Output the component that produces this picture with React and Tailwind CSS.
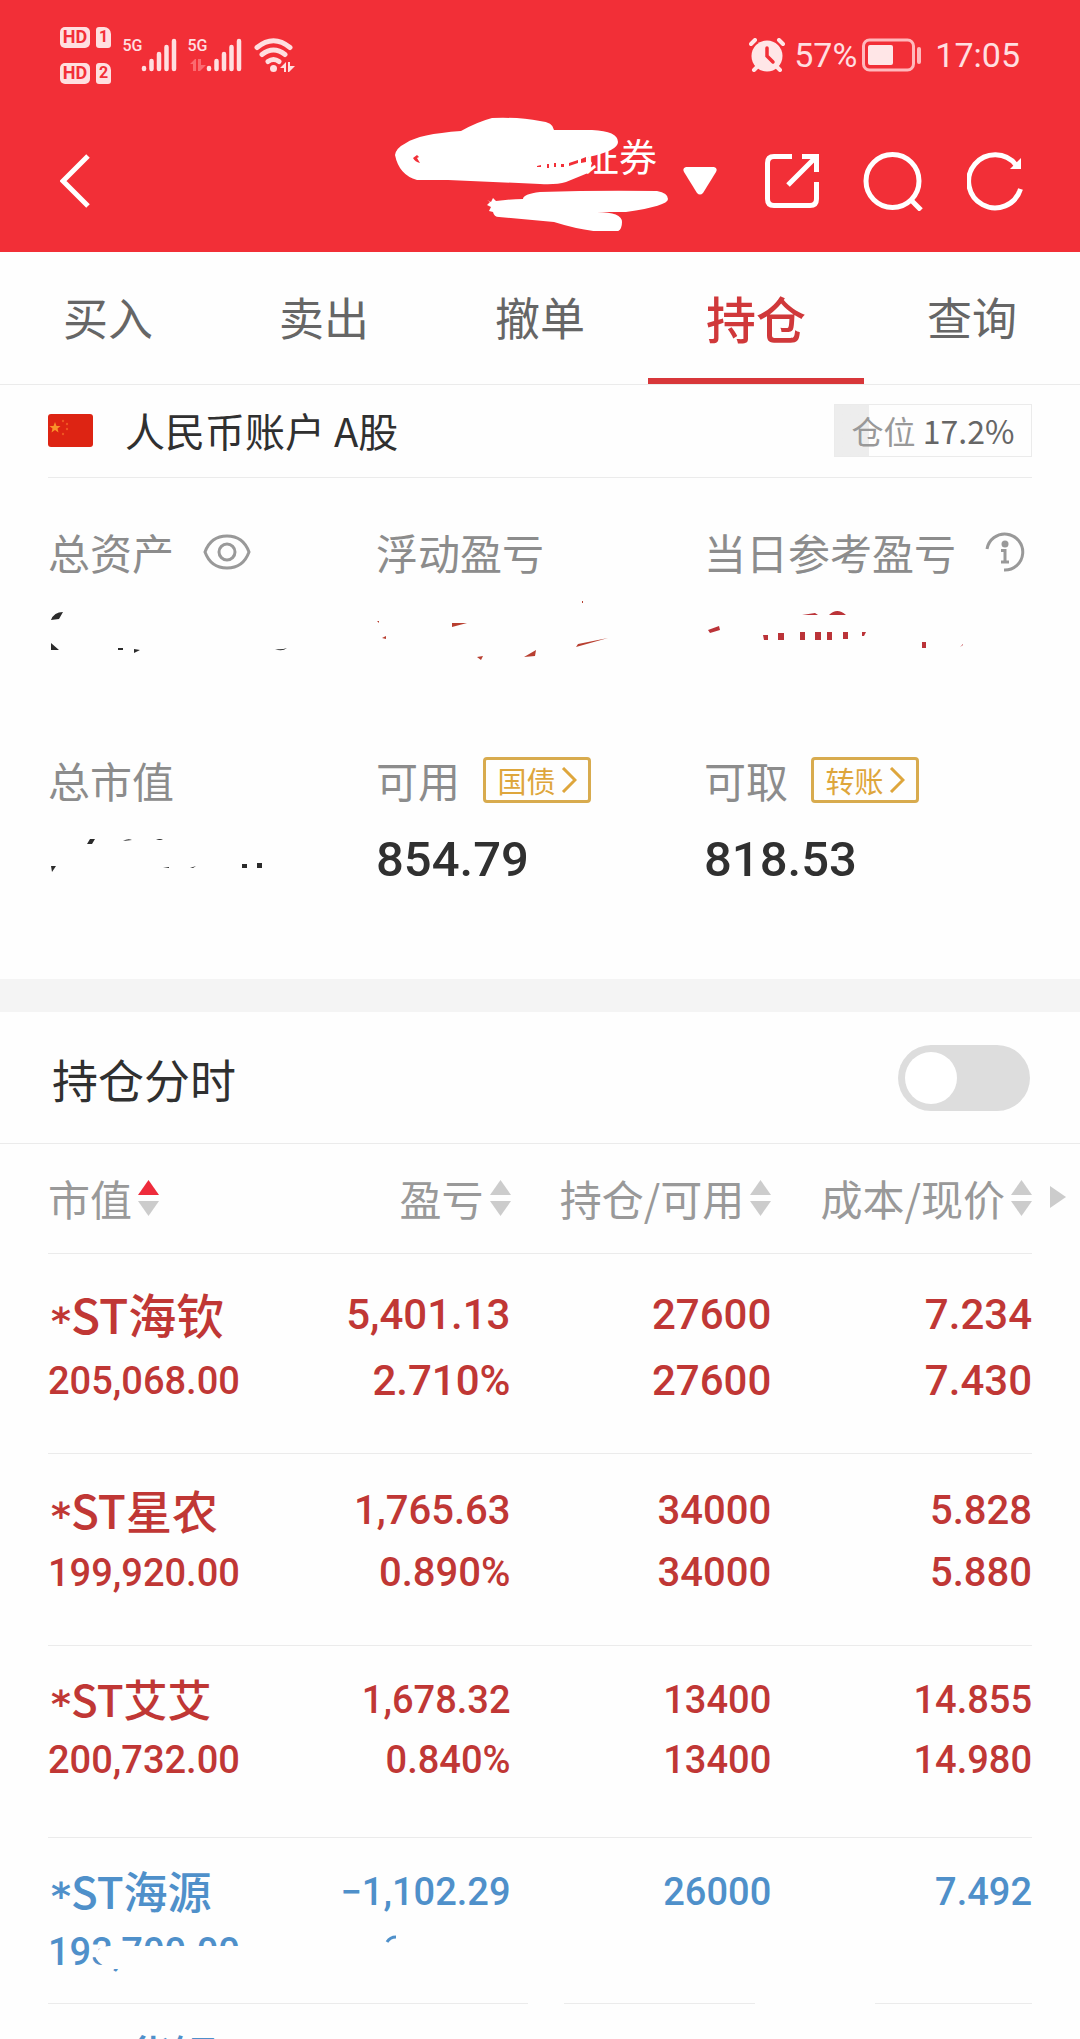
import { useState } from 'react'
import clsx from 'clsx'

const tabs = ['买入', '卖出', '撤单', '持仓', '查询']

const columns = [
  { label: '市值', sorted: true },
  { label: '盈亏' },
  { label: '持仓/可用' },
  { label: '成本/现价' },
]

const holdings = [
  { name: 'ST海钦', value: '205,068.00', profit: ['5,401.13', '2.710%'], amount: ['27600', '27600'], price: ['7.234', '7.430'], size: 'lg' },
  { name: 'ST星农', value: '199,920.00', profit: ['1,765.63', '0.890%'], amount: ['34000', '34000'], price: ['5.828', '5.880'], size: 'md' },
  { name: 'ST艾艾', value: '200,732.00', profit: ['1,678.32', '0.840%'], amount: ['13400', '13400'], price: ['14.855', '14.980'], size: 'sm' },
]

const rowSizes = {
  lg: { row: 'h-[200px]', cell: 'pt-7 leading-[66px]', name: 'h-[66px] text-[48px] leading-[62px]', number: 'text-[42px]' },
  md: { row: 'h-[192px]', cell: 'pt-[26px] leading-[62px]', name: 'h-[62px] text-[46px] leading-[58px]', number: 'text-[40px]' },
  sm: { row: 'h-[192px]', cell: 'pt-6 leading-[60px]', name: 'h-[60px] text-[44px] leading-[56px]', number: 'text-[38px]' },
}

const SimBadge = ({ number }) => (
  <div className="flex items-center gap-[6px] text-[#f22f37]">
    <span className="flex h-[21px] w-[30px] items-center justify-center rounded-[5px] bg-[#ffdfe0] text-[18px] font-bold leading-none">HD</span>
    <span className="flex h-[21px] w-[15px] items-center justify-center rounded-[3px] rounded-tr-[7px] bg-[#ffdfe0] text-[16px] font-bold leading-none">{number}</span>
  </div>
)

const Signal = ({ data }) => (
  <div className="flex items-start">
    <div className="flex w-[17px] flex-col items-center">
      <span className="text-[16px] font-medium leading-[16px] text-[#ffdfe0]">5G</span>
      <svg viewBox="0 0 16 12" className={clsx('mt-[5px] h-3 w-4', !data && 'invisible')} fill="#fb6a70" aria-hidden="true">
        <path d="M0 5 5 0h1v12H3V5zM8 0h3v6h5l-6 6H8z" />
      </svg>
    </div>
    <svg viewBox="0 0 36 34" className="h-[34px] w-9" stroke="#ffdfe0" strokeWidth="4.500" strokeLinecap="round" aria-hidden="true">
      <path d="M3 30v1M10.500 23v8M18 16v15M25.500 9v22M33 3v28" />
    </svg>
  </div>
)

const StatusBar = () => (
  <div className="flex h-[110px] items-center justify-between pl-[60px] pr-[60px] font-['Roboto',sans-serif]">
    <div className="flex items-center">
      <div className="flex flex-col gap-[15px]">
        <SimBadge number="1" />
        <SimBadge number="2" />
      </div>
      <div className="ml-[13px] flex gap-3">
        <Signal />
        <Signal data />
        <svg viewBox="0 0 42 34" className="h-[34px] w-[42px]" fill="none" stroke="#ffdfe0" strokeWidth="5" strokeLinecap="round" aria-hidden="true">
          <path d="M3 9.500Q19.500-4 36 9.500M8 16.500q11.500-9 23 0M14 23.500q5.500-4 11 0" />
          <circle cx="19.500" cy="30.500" r="3.500" fill="#ffdfe0" stroke="none" />
          <path d="M26 30l6-6v10h-2v-4zM34 24h2v4h5l-6 6h-1z" fill="#ffdfe0" stroke="none" />
        </svg>
      </div>
    </div>
    <div className="flex items-center text-[34px] leading-none text-[#ffdfe0]">
      <svg viewBox="0 0 36 34" className="h-[34px] w-9" fill="none" stroke="#ffe6e7" strokeWidth="4" strokeLinecap="round" aria-hidden="true">
        <circle cx="18" cy="18" r="15.500" fill="#ffe6e7" stroke="none" />
        <path d="M2 6l4-4M34 6l-4-4M5 32l4-4M31 32l-4-4" />
        <path d="M18 10v8l6 6" stroke="#f22f37" strokeWidth="3.500" />
      </svg>
      <span className="ml-[9px]">57%</span>
      <svg viewBox="0 0 60 34" className="ml-[5px] h-[34px] w-[60px]" fill="none" aria-hidden="true">
        <rect x="1.500" y="2" width="50" height="30" rx="6" stroke="#ffb9bc" strokeWidth="3" />
        <rect x="6" y="7" width="25" height="20" rx="2" fill="#ffe6e7" />
        <rect x="55" y="9" width="4" height="17" rx="2" fill="#ffb9bc" />
      </svg>
      <span className="ml-[13px]">17:05</span>
    </div>
  </div>
)

const NavBar = () => (
  <div className="flex h-[142px] items-center pl-[60px] pr-[56px] text-white">
    <button type="button" aria-label="返回">
      <svg viewBox="0 0 32 54" className="h-[54px] w-8" fill="none" stroke="currentColor" strokeWidth="5">
        <path d="M28 2 3 27l25 25" />
      </svg>
    </button>

    {/* Broker name, partly painted over */}
    <div className="relative ml-auto flex h-[114px] w-[273px] justify-end pr-[11px] pt-[14px] mb-[14px]">
      <h1 className="text-[38px] leading-[48px]">证券</h1>
      <svg viewBox="0 0 273 114" className="absolute inset-0 h-full w-full" aria-hidden="true">
        <path
          fill="#fff"
          d="M0 38Q1 31 11 26 24 17 66 14q16-9 31-13 28-1 48 3 13 1 14 9h38q26 1 26 12 0 9-30 15l4 6-4 10-22 9q-10 3-26 2l-92-4H22Q4 58 0 38ZM92 83l4 2 2-4 3 3q14-2 27-2 0-5 17-7 60-2 117-1 11 2 11 8 0 7-42 13h-34q30-1 30 10 0 10-8 10-25 1-60-10l-55-5Q99 100 98 95l-4-1 2-4-4-2 3-3Z"
        />
        <path fill="#f22f37" d="m18 41 4-3 2 2-2 1 3 5q-5-1-7-5ZM142 49l4-1v2h-4ZM152 47h2v4h-2ZM159 46h2v4h-2ZM166 47h3v3h-3ZM174 46l9-3v3l-9 3ZM186 42l5-2v5l-5 1Z" />
      </svg>
    </div>
    <button type="button" aria-label="切换账户" className="ml-[15px]">
      <svg viewBox="0 0 34 28" className="h-7 w-[34px]" fill="currentColor">
        <path d="M3 0h28q4 1 2 5L20 26q-3 3-6 0L1 5Q-1 1 3 0Z" />
      </svg>
    </button>
    <div className="ml-12 flex items-center gap-11">
      <button type="button" aria-label="分享">
        <svg viewBox="0 0 54 54" className="h-[54px] w-[54px]" fill="none" stroke="currentColor" strokeWidth="5">
          <path d="M27 2.500H9Q2.500 2.500 2.500 9v36q0 6.500 6.500 6.500h36q6.500 0 6.500-6.500V28M37 2.500h14.500V18M50 4 23 31" />
        </svg>
      </button>
      <button type="button" aria-label="搜索">
        <svg viewBox="0 0 60 60" className="h-[60px] w-[60px]" fill="none" stroke="currentColor" strokeWidth="5">
          <circle cx="29.500" cy="30" r="26.500" />
          <path d="m48 49 10 10" />
        </svg>
      </button>
      <button type="button" aria-label="刷新">
        <svg viewBox="0 0 57 60" className="h-[60px] w-[57px]" fill="none" stroke="currentColor" strokeWidth="5">
          <path d="M49 14A26.500 26.500 0 1 0 53.500 38" />
          <path d="M54 7v11H43Z" fill="currentColor" stroke="none" />
        </svg>
      </button>
    </div>
  </div>
)

const Flag = () => (
  <svg viewBox="0 0 45 33" className="h-[33px] w-[45px]" aria-hidden="true">
    <rect width="45" height="33" rx="3" fill="#dd2413" />
    <path fill="#f9922a" d="m7 8 1.500 4h4L9.500 14.500l1 4L7 16l-3.500 2.500 1-4-3-2.500h4z" />
    <g fill="#ee5522">
      <circle cx="15" cy="7" r="1.200" />
      <circle cx="19" cy="10" r="1.200" />
      <circle cx="19" cy="15" r="1.200" />
      <circle cx="15" cy="20" r="1.200" />
    </g>
  </svg>
)

const EyeIcon = () => (
  <svg viewBox="0 0 48 36" className="h-9 w-12" fill="none" stroke="#999" strokeWidth="3">
    <path d="M2 18C6 7 14 2 24 2s18 5 22 16C42 29 34 34 24 34S6 29 2 18Z" />
    <circle cx="24" cy="18" r="8" />
  </svg>
)

const InfoIcon = () => (
  <svg viewBox="0 0 40 40" className="h-10 w-10" fill="none" stroke="#999" strokeWidth="3">
    <path d="M2 17A18 18 0 1 1 19 38" />
    <circle cx="20" cy="12" r="3.500" fill="#999" stroke="none" />
    <path d="M16 18.500h4V30M16 30h8" />
  </svg>
)

const Field = ({ label, gap = 'gap-[29px]', extra, children }) => (
  <div>
    <div className={clsx('flex h-14 items-center text-[42px] leading-[56px] text-[#8c8c8c]', gap)}>
      <span>{label}</span>
      {extra}
    </div>
    {children}
  </div>
)

const LinkButton = ({ children }) => (
  <button type="button" className="flex h-[46px] w-[108px] items-center justify-center gap-[5px] rounded-[4px] border-3 border-[#d8ab4e] text-[29px] leading-none text-[#dea63c]">
    {children}
    <svg viewBox="0 0 16 26" className="h-[26px] w-4" fill="none" stroke="currentColor" strokeWidth="3" aria-hidden="true">
      <path d="m2 1 12 12L2 25" />
    </svg>
  </button>
)

// What is left of a figure after it was painted out
const Scraps = ({ d, color, className }) => (
  <svg viewBox="0 0 328 64" className={clsx('h-16 w-full', className)} preserveAspectRatio="xMinYMin" fill={color} aria-hidden="true">
    <path d={d} />
  </svg>
)

const Assets = () => (
  <section className="mx-12 grid h-[501px] grid-cols-3 grid-rows-[228px_1fr] pt-[46px]">
    <Field label="总资产" extra={<button type="button" aria-label="隐藏金额"><EyeIcon /></button>}>
      <Scraps
        className="mt-[20px]"
        color="#2b2b2b"
        d="M3 20Q6 12 15 12L11 19ZM3 43l8 7H3ZM70 48h5v2h-5ZM86 49l6 1-6 3ZM227 49q7 1 12-1-5 4-12 1Z"
      />
    </Field>
    <Field label="浮动盈亏">
      <Scraps
        className="mt-[20px]"
        color="#b83f30"
        d="M1 21h2v2ZM6 38l4-2v3ZM76 23l15 0-15 4ZM101 57l6-1-2 4ZM148 57l12-7-1 6ZM200 47l2-3 30-6ZM206 1h1v2h-1Z"
      />
    </Field>
    <Field label="当日参考盈亏" extra={<button type="button" aria-label="说明"><InfoIcon /></button>}>
      <Scraps
        className="mt-[20px]"
        color="#bb3338"
        d="M4 30l11-4 1 4-10 3ZM59 35h5v5h-4ZM74 33h6v7h-6ZM96 32h5v8h-5ZM111 32h6v8h-6ZM123 32h5v8h-5ZM139 32h5v7h-5ZM158 32h4l-2 4h-2ZM218 42h4v6h-4ZM98 15l13-2 3 2ZM125 15q8-8 17 0ZM256 47l3-3v1Z"
      />
    </Field>
    <Field label="总市值">
      <Scraps
        className="mt-[20px]"
        color="#2b2b2b"
        d="M39 16l3-5h5l-3 5ZM75 13q5-3 9-1ZM108 12q4-2 7 0ZM3 38h5l-4 6ZM115 40l6-1v1ZM142 40l6-2-3 2ZM194 36h5v4h-5ZM209 35h5v5h-5Z"
      />
    </Field>
    <Field label="可用" gap="gap-[23px]" extra={<LinkButton>国债</LinkButton>}>
      <p className="mt-[22px] font-['Roboto',sans-serif] text-[49px] font-medium leading-[60px] text-[#303030]">854.79</p>
    </Field>
    <Field label="可取" gap="gap-[23px]" extra={<LinkButton>转账</LinkButton>}>
      <p className="mt-[22px] font-['Roboto',sans-serif] text-[49px] font-medium leading-[60px] text-[#303030]">818.53</p>
    </Field>
  </section>
)

const SortIcon = ({ sorted }) => (
  <svg viewBox="0 0 21 36" className="h-9 w-[21px]" aria-hidden="true">
    <path d="M10.500 0 21 15H0Z" fill={sorted ? '#ee2b3b' : '#ccc'} />
    <path d="M0 21h21L10.500 36Z" fill="#ccc" />
  </svg>
)

const StockName = ({ children }) => (
  <>
    <span className="ml-[3px] font-['DejaVu_Sans',sans-serif] text-[38px] font-bold leading-none">*</span>
    {children}
  </>
)

const HoldingRow = ({ name, value, profit, amount, price, size }) => {
  const s = rowSizes[size]
  return (
    <tr className={clsx('border-b border-[#ebebeb] align-top text-[#c03735]', s.row)}>
      <td className={s.cell}>
        <div className={clsx("whitespace-nowrap font-['Noto_Sans_CJK_SC',sans-serif] font-medium", s.name)}>
          <StockName>{name}</StockName>
        </div>
        <div className="text-[38px]">{value}</div>
      </td>
      {[profit, amount, price].map((pair, i) => (
        <td key={i} className={clsx('text-right', s.cell, s.number)}>
          <div>{pair[0]}</div>
          <div>{pair[1]}</div>
        </td>
      ))}
    </tr>
  )
}

const Holdings = () => (
  <section className="mx-12">
    <table className="w-full table-fixed border-collapse font-['Roboto','Noto_Sans_CJK_SC',sans-serif] font-medium">
      <colgroup>
        <col />
        <col className="w-[26.5%]" />
        <col className="w-[26.5%]" />
        <col className="w-[26.5%]" />
      </colgroup>
      <thead>
        <tr className="h-[109px] border-b border-[#ebebeb]">
          {columns.map((column, i) => (
            <th key={column.label} className="relative p-0 font-['Noto_Sans_CJK_SC',sans-serif] text-[42px] font-normal leading-[56px] text-[#999]">
              <button type="button" className={clsx('flex w-full items-center gap-[6px] whitespace-nowrap', i > 0 && 'justify-end')}>
                {column.label}
                <SortIcon sorted={column.sorted} />
              </button>
              {i === columns.length - 1 && (
                <svg viewBox="0 0 16 22" className="absolute -right-[34px] top-[42px] h-[22px] w-4" fill="#ccc" aria-hidden="true">
                  <path d="m0 0 16 11L0 22Z" />
                </svg>
              )}
            </th>
          ))}
        </tr>
      </thead>
      <tbody>
        {holdings.map((holding) => (
          <HoldingRow key={holding.name} {...holding} />
        ))}

        {/* Painted-over position */}
        <tr className="h-[166px] align-top text-[38px] leading-[60px] text-[#4f90ca]">
          <td className="pt-6">
            <div className="h-[60px] whitespace-nowrap font-['Noto_Sans_CJK_SC',sans-serif] text-[44px] leading-[56px]">
              <StockName>ST海源</StockName>
            </div>
            <div className="relative">
              193,700.00
              <svg viewBox="0 0 200 60" className="absolute left-0 top-0 h-[60px] w-[200px]" fill="#fefefe" aria-hidden="true">
                <path d="M47 34q3-10 14-10h139v36H76V47H66l-10-3q-7-4-9-10Z" />
              </svg>
            </div>
          </td>
          <td className="pt-6 text-right">
            <div>−1,102.29</div>
            <svg viewBox="0 0 126 60" className="ml-auto h-[60px] w-[126px]" fill="none" stroke="currentColor" strokeWidth="3" aria-hidden="true">
              <path d="M2 20q3-5 9-5" />
            </svg>
          </td>
          <td className="pt-6 text-right">26000</td>
          <td className="pt-6 text-right">7.492</td>
        </tr>
      </tbody>
    </table>
    <div className="flex h-px gap-9">
      <div className="w-[480px] bg-[#ebebeb]"></div>
      <div className="w-[191px] bg-[#ebebeb]"></div>
      <div className="ml-auto w-[157px] bg-[#ebebeb]"></div>
    </div>
    <div className="pl-[80px] pt-5 text-[44px] font-medium leading-[60px] text-[#4f90ca]">华钰</div>
  </section>
)

const App = () => {
  const [active, setActive] = useState('持仓')
  const [intraday, setIntraday] = useState(false)

  return (
    <div className="h-screen overflow-hidden bg-[#fefefe] font-['Noto_Sans_CJK_SC',sans-serif]">
      <header className="bg-[#f22f37]">
        <StatusBar />
        <NavBar />
      </header>

      {/* Tabs */}
      <nav className="grid h-[133px] grid-cols-5 border-b border-[#ebebeb]">
        {tabs.map((tab) => (
          <button
            key={tab}
            type="button"
            onClick={() => setActive(tab)}
            className={clsx(
              'border-b-6 pt-[3px] leading-none',
              tab === active ? 'border-b-[#d8373a] text-[50px] font-medium text-[#d0383a]' : 'border-b-transparent text-[45px] text-[#666]'
            )}
          >
            {tab}
          </button>
        ))}
      </nav>

      {/* Account */}
      <div className="mx-12 flex h-[93px] items-center border-b border-[#ebebeb] pb-[2px]">
        <Flag />
        <h2 className="ml-8 text-[40px] leading-[56px] text-[#303030]">人民币账户 A股</h2>
        <div className="ml-auto flex h-[53px] w-[198px] items-center justify-center whitespace-pre border border-[#ebebeb] bg-linear-to-r from-[#ededed] from-[17.2%] to-transparent to-[17.2%] text-[32px] leading-none text-[#999]">
          仓位 <span className="text-[#666]">17.2%</span>
        </div>
      </div>

      <Assets />

      <div className="h-[33px] bg-[#f4f4f4]"></div>

      <label className="flex h-[132px] items-center justify-between border-b border-[#ebebeb] pl-[52px] pr-[50px] text-[46px] leading-[60px] text-[#303030]">
        持仓分时
        <input
          type="checkbox"
          role="switch"
          checked={intraday}
          onChange={(e) => setIntraday(e.target.checked)}
          className="flex h-[66px] w-[132px] appearance-none items-center rounded-full bg-[#ddd] px-[7px] before:size-[52px] before:rounded-full before:bg-white checked:justify-end checked:bg-[#d8373a]"
        />
      </label>

      <Holdings />
    </div>
  )
}

export default App
